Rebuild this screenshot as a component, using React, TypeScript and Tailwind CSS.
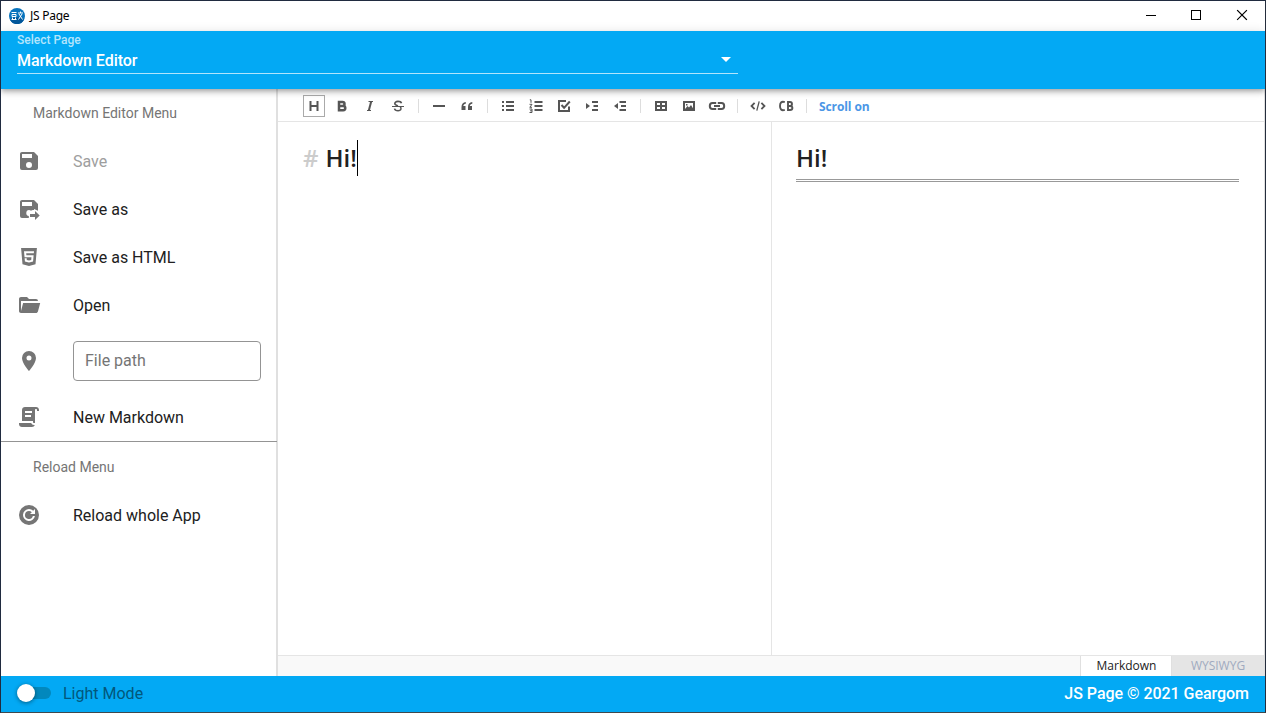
import React from "react";

const GLYPHS = {
  save: "M15,9H5V5H15M12,19A3,3 0 0,1 9,16A3,3 0 0,1 12,13A3,3 0 0,1 15,16A3,3 0 0,1 12,19M17,3H5C3.89,3 3,3.9 3,5V19A2,2 0 0,0 5,21H19A2,2 0 0,0 21,19V7L17,3Z",
  saveAs:
    "M17,3H5C3.89,3 3,3.9 3,5V19A2,2 0 0,0 5,21H11.8V18.95A3,3 0 0,1 12,13C12.8,13 13.5,13.3 14,13.8C14.6,13.3 15.2,13 16,13H17V12L21,13.8V7L17,3M15,9H5V5H15V9M13,17H18V14L22.7,18.5L18,23V20H13V17Z",
  html: "M12,17.56L16.07,16.43L16.62,10.33H9.38L9.2,8.3H16.8L17,6.31H7L7.56,12.32H14.45L14.22,14.9L12,15.5L9.78,14.9L9.64,13.24H7.64L7.93,16.43L12,17.56M4.07,3H19.93L18.5,19.2L12,21L5.5,19.2L4.07,3Z",
  open: "M19,20H4C2.89,20 2,19.1 2,18V6C2,4.89 2.89,4 4,4H10L12,6H19A2,2 0 0,1 21,8H21L4,8V18L6.14,10H23.21L20.93,18.5C20.7,19.37 19.92,20 19,20Z",
  marker:
    "M12,11.5A2.5,2.5 0 0,1 9.5,9A2.5,2.5 0 0,1 12,6.5A2.5,2.5 0 0,1 14.5,9A2.5,2.5 0 0,1 12,11.5M12,2A7,7 0 0,0 5,9C5,14.25 12,22 12,22C12,22 19,14.25 19,9A7,7 0 0,0 12,2Z",
  script:
    "M17.8,20C17.4,21.2 16.3,22 15,22H5C3.3,22 2,20.7 2,19V18H5L14.2,18C14.6,19.2 15.7,20 17,20H17.8M19,2C20.7,2 22,3.3 22,5V6H20V5C20,4.4 19.6,4 19,4C18.4,4 18,4.4 18,5V18H17C16.4,18 16,17.6 16,17V16H5V5C5,3.3 6.3,2 8,2H19M8,6V8H15V6H8M8,10V12H14V10H8Z",
  reload:
    "M12 2A10 10 0 1 0 22 12A10 10 0 0 0 12 2M18 11H13L14.81 9.19A3.94 3.94 0 0 0 12 8A4 4 0 1 0 15.86 13H17.91A6 6 0 1 1 12 6A5.91 5.91 0 0 1 16.22 7.78L18 6Z",
};

function Glyph({ d }: { d: string }) {
  return (
    <svg viewBox="0 0 24 24" className="size-6 shrink-0 fill-[#757575]" fillRule="evenodd">
      <path d={d} />
    </svg>
  );
}

function MenuItem({ d, label, disabled }: { d: string; label: string; disabled?: boolean }) {
  return (
    <button className="flex h-12 w-full items-center gap-8 pl-4 text-left">
      <Glyph d={d} />
      <span className={disabled ? "pt-[2px] text-[#9e9e9e]" : "pt-[2px] text-[#212121]"}>{label}</span>
    </button>
  );
}

function Tool({ children, boxed }: { children: React.ReactNode; boxed?: boolean }) {
  return (
    <button
      className={
        boxed
          ? "mr-[6px] flex size-[22px] items-center justify-center border border-[#aaa]"
          : "mr-[6px] flex size-[22px] items-center justify-center"
      }
    >
      <svg width="14" height="14" viewBox="0 0 14 14" fill="none" stroke="#555" strokeWidth="2" className="shrink-0 overflow-visible">
        {children}
      </svg>
    </button>
  );
}

function Sep() {
  return <span className="mr-[9px] ml-[3px] h-[14px] w-px bg-[#ddd]" />;
}

function Toolbar() {
  return (
    <div className="flex h-[33px] items-center border-b border-[#e5e5e5] pt-[2px] pl-[25px]">
      <Tool boxed>
        <path d="M3.5 2v10M10.5 2v10M3 7h8" />
      </Tool>
      <Tool>
        <path d="M4 3h3.5a2 2 0 0 1 0 4H4zM4 7h4.2a2.1 2.1 0 0 1 0 4.2H4z" strokeWidth="2.5" />
      </Tool>
      <Tool>
        <path d="M5.5 2.5H10M4 11.5h4" strokeWidth="1.2" />
        <path d="M8.2 2.5L5.8 11.5" />
      </Tool>
      <Tool>
        <path d="M10.5 4.2C10 2.8 8.6 2.4 7 2.4 4.8 2.4 3.8 3.5 3.8 4.6 3.8 5.8 5 6.3 7 7M9.3 7.7c1.8 2.4.2 4-2.2 4-1.8 0-3.2-.6-3.6-2.1" strokeWidth="1.6" />
        <path d="M1 7.5h12" strokeWidth="1" />
      </Tool>
      <Sep />
      <Tool>
        <path d="M1 7h12" />
      </Tool>
      <Tool>
        <path d="M5.8 3C3.1 3.3 1.5 5.1 1.5 8v3h4V7H3.3c.1-1.3 1-2 2.5-2.3zM12.3 3C9.6 3.3 8 5.1 8 8v3h4V7H9.8c.1-1.3 1-2 2.5-2.3z" fill="#555" stroke="none" />
      </Tool>
      <Sep />
      <Tool>
        <path d="M1 3h2M1 7h2M1 11h2M5 3h8M5 7h8M5 11h8" />
      </Tool>
      <Tool>
        <path d="M5.5 3H13.5M5.5 7H13.5M5.5 11H13.5" />
        <path d="M.8.8H2v3M.5 5.3H3L.8 8.3H3M.5 10H3v3.5H.5M1 11.8h2" strokeWidth="1" />
      </Tool>
      <Tool>
        <path d="M12 7.5V12H2V2h7" />
        <path d="M4.5 6l2.6 2.8L12.8 2.5" />
      </Tool>
      <Tool>
        <path d="M7 3h6M8.5 7H13M7 11h6" />
        <path d="M1 4l4 3-4 3z" fill="#555" stroke="none" />
      </Tool>
      <Tool>
        <path d="M6.5 3H13M8 7h5M6.5 11H13" />
        <path d="M5 4L1 7l4 3z" fill="#555" stroke="none" />
      </Tool>
      <Sep />
      <Tool>
        <path d="M2 3h10v8H2zM7 3v8M2 7h10" />
      </Tool>
      <Tool>
        <path d="M2 3h10v8H2z" />
        <path d="M3 10l2.5-3 1.5 1.5L9 6l3 5H3z" fill="#555" stroke="none" />
        <path d="M4 5h1.5v1.5H4z" fill="#555" stroke="none" />
      </Tool>
      <Tool>
        <path d="M6.2 4H2.5Q-.2 4-.2 7t2.7 3h3.7M7.8 4h3.7q2.7 0 2.7 3t-2.7 3H7.8M4 7h6" />
      </Tool>
      <Sep />
      <Tool>
        <path d="M3.6 3.8L.5 7l3.1 3.2M10.4 3.8L13.5 7l-3.1 3.2" strokeWidth="1.8" />
        <path d="M8.2 2.3L5.8 11.7" strokeWidth="1.3" />
      </Tool>
      <Tool>
        <path d="M5.8 3.1C2.2 1.9 1 4 1 7s1.3 5.1 4.8 3.9M9 3h2q2 0 2 2t-2 2H9zM9 7h2q2.4 0 2.4 2T11 11H9z" strokeWidth="1.9" />
      </Tool>
      <Sep />
      <button className="ml-[3px] pt-[2px] font-['Open_Sans',sans-serif] text-[12px] font-bold tracking-[-0.1px] text-[#4b96e6]">
        Scroll on
      </button>
    </div>
  );
}

function TitleBar() {
  return (
    <div className="flex h-[30px] items-center bg-white pl-2">
      <svg width="16" height="16" viewBox="0 0 16 16" className="-mt-px">
        <circle cx="8" cy="8" r="8" fill="#0873bd" />
        <path d="M1 12A8 8 0 0 0 15 12L12 9 3 10z" fill="#00569a" />
        <path d="M2.5 4.5h5M3 6.5h4v2H3zM2.5 11.5h5M3.5 9.5v2M6.5 9.5v2M9 5h5M11.5 3.5V5M10 6l3.5 5.5M13 6L9.5 11.5" stroke="#fff" fill="none" />
      </svg>
      <span className="ml-[5px] font-['Noto_Sans',sans-serif] text-[12px] tracking-[-0.25px] text-black">JS Page</span>
      <div className="ml-auto flex">
        <svg width="138" height="30" viewBox="0 0 138 30" fill="none" stroke="#000" shapeRendering="crispEdges">
          <path d="M19 14.5h10M64.5 9.5h9v9h-9z" />
          <path d="M110.5 9.5l9 9M119.5 9.5l-9 9" shapeRendering="auto" strokeWidth="1.1" strokeLinecap="square" />
        </svg>
      </div>
    </div>
  );
}

function Sidebar() {
  return (
    <nav className="w-[277px] shrink-0 border-r-2 border-[#e0e0e0] bg-white">
      <h2 className="flex h-12 items-center pl-8 text-[14px] text-[#757575]">Markdown Editor Menu</h2>
      <MenuItem d={GLYPHS.save} label="Save" disabled />
      <MenuItem d={GLYPHS.saveAs} label="Save as" />
      <MenuItem d={GLYPHS.html} label="Save as HTML" />
      <MenuItem d={GLYPHS.open} label="Open" />
      <div className="flex h-16 items-center gap-8 pr-[14px] pl-4">
        <Glyph d={GLYPHS.marker} />
        <input
          placeholder="File path"
          className="h-10 w-[188px] shrink-0 rounded border border-[#949494] px-[11px] pb-px text-[16px] placeholder:text-[#757575]"
        />
      </div>
      <MenuItem d={GLYPHS.script} label="New Markdown" />
      <hr className="-mr-px border-[#949494]" />
      <h2 className="flex h-[49px] items-center pt-[2px] pl-8 text-[14px] text-[#757575]">Reload Menu</h2>
      <MenuItem d={GLYPHS.reload} label="Reload whole App" />
    </nav>
  );
}

export default function App() {
  return (
    <div className="flex h-[713px] w-[1266px] flex-col overflow-hidden border border-t-[#202b40] border-r-[#242d3d] border-b-[#3f484d] border-l-[#202b40] bg-white font-[Roboto,sans-serif] text-[16px]">
      <TitleBar />
      <header className="relative z-10 h-[58px] shrink-0 bg-[#03a9f4] px-4 shadow-[0_2px_4px_-1px_rgba(0,0,0,.2),0_4px_5px_rgba(0,0,0,.14),0_1px_10px_rgba(0,0,0,.12)]">
        <div className="flex h-[43px] w-[721px] flex-col border-b border-[#b3e5fc]">
          <span className="mt-[2px] text-[12px] leading-[14px] font-medium text-[#b3e5fc]">Select Page</span>
          <div className="flex h-[26px] items-center justify-between pr-[7px] font-medium text-white">
            <span className="pt-[2px] tracking-[-0.05px]">Markdown Editor</span>
            <svg width="10" height="5" viewBox="0 0 10 5" fill="#fff" className="-mt-px">
              <path d="M0 0h10L5 5z" />
            </svg>
          </div>
        </div>
      </header>
      <div className="flex min-h-0 flex-1">
        <Sidebar />
        <main className="flex flex-1 flex-col border-r border-[#e0e0e0]">
          <Toolbar />
          <div className="flex flex-1 font-['Open_Sans',sans-serif] text-[24px] leading-[36px] font-semibold text-[#222]">
            <section className="w-[494px] border-r border-[#e5e5e5] pt-[18px] pl-[25px]">
              <div className="flex">
                <span className="mr-[7px] text-[#ccc]">#</span>
                <span>Hi!</span>
                <span className="h-9 w-px bg-black" />
              </div>
            </section>
            <section className="flex-1 pt-[18px] pr-[25px] pl-[24px]">
              <h1 className="h-[42px] border-b-[3px] border-double border-[#999]">Hi!</h1>
            </section>
          </div>
          <div className="flex h-[21px] justify-end border-t border-[#e5e5e5] bg-[#f9f9f9] font-['Open_Sans',sans-serif] text-[12px]">
            <button className="w-[92px] border-x border-[#e0e0e0] bg-white pl-px text-[#222]">Markdown</button>
            <button className="w-[92px] bg-[#e5e5e5] text-[#a0aabf]">WYSIWYG</button>
          </div>
        </main>
      </div>
      <footer className="flex h-9 shrink-0 items-center bg-[#03a9f4] px-4">
        <div className="relative -mt-[2px] h-3 w-[34px] rounded-full bg-[#0288bd]">
          <span className="absolute top-[-3px] left-0 size-[18px] rounded-full bg-white shadow-[0_1px_4px_rgba(0,0,0,.45)]" />
        </div>
        <span className="ml-3 text-[#02577b]">Light Mode</span>
        <span className="ml-auto font-medium tracking-[-0.04px] text-white">JS Page © 2021 Geargom</span>
      </footer>
    </div>
  );
}
